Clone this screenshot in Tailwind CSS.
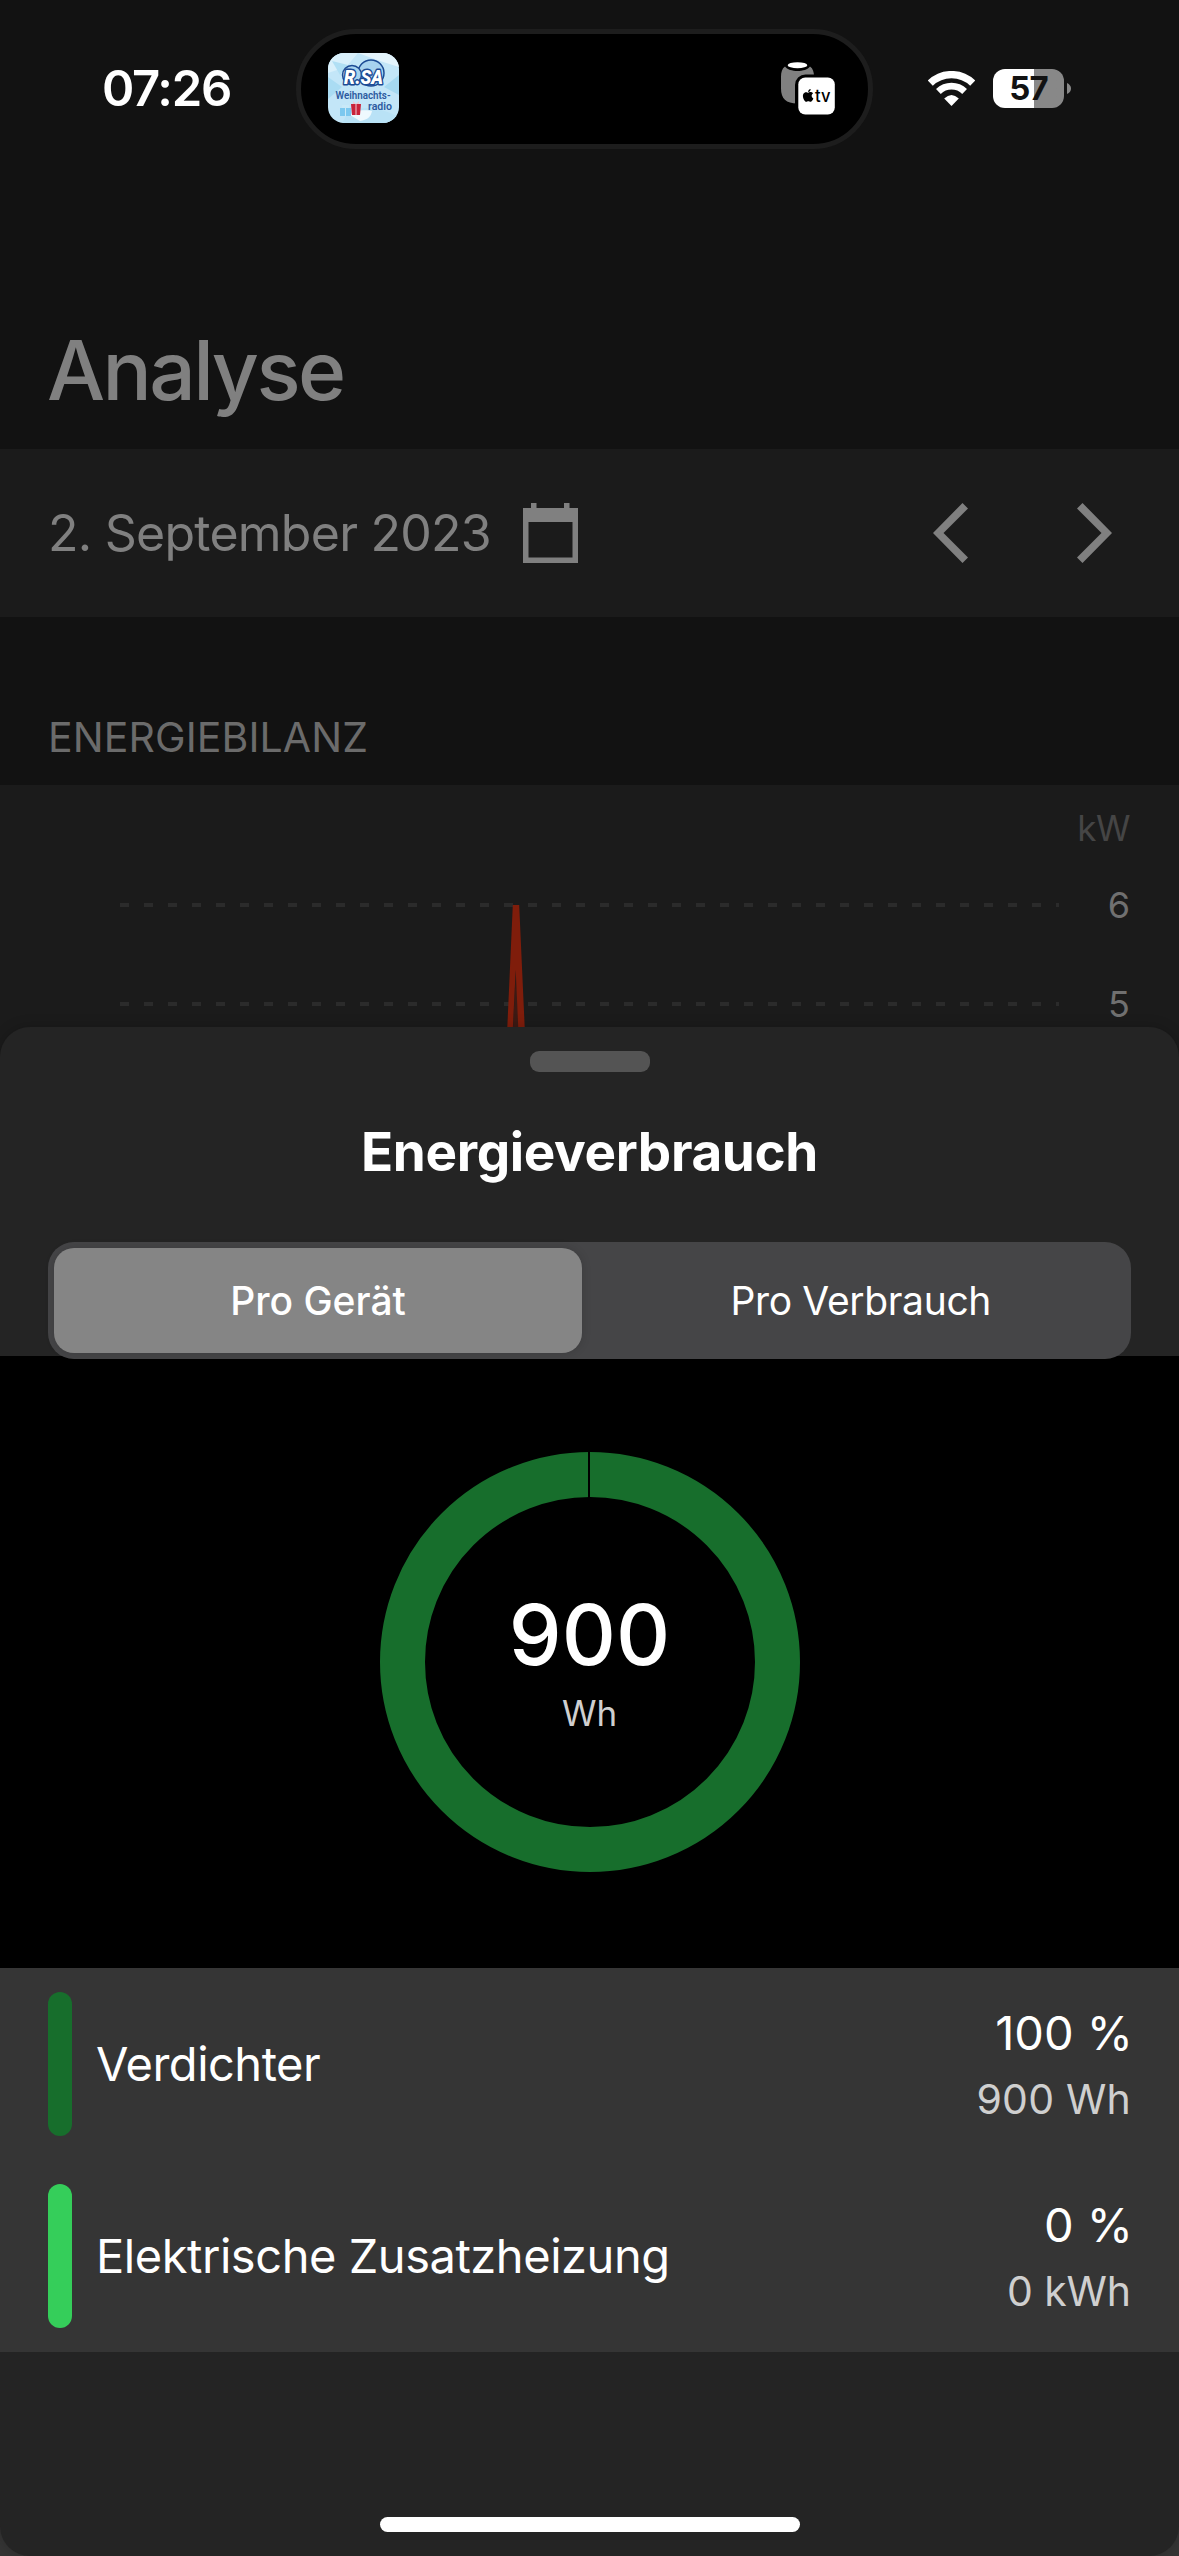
<!DOCTYPE html>
<html lang="de">

<head>
    <meta charset="UTF-8">
    <meta name="viewport" content="width=device-width, initial-scale=1.0">
    <title>Analyse</title>
    <script src="https://cdn.jsdelivr.net/npm/@tailwindcss/browser@4"></script>
</head>

<body class="bg-[#121212] font-['Inter','Liberation_Sans',sans-serif]">
    <div class="relative w-[1179px] h-[2556px] overflow-hidden bg-[#353535]">

        <!-- Status bar -->
        <header class="flex items-center h-[176px] pl-[102px] bg-[#121212]">
            <div class="w-[194px] text-[49px] font-semibold text-white leading-none tracking-[-1.3px]">07:26</div>

            <!-- Dynamic island -->
            <div class="flex items-center justify-between w-[577px] h-[120px] mt-[2px] pb-[2px] pl-[27px] pr-[33px] rounded-full bg-black border-[5px] border-[#1d1d1d]">
                <svg class="w-[71px] h-[70px] rounded-[16px]" viewBox="0 0 71 70" font-family="Roboto, Inter, sans-serif">
                    <rect width="71" height="70" fill="#c3e6f8" />
                    <path d="M0 0h30L18 14 0 20z" fill="#d9f0fb" />
                    <path d="M30 0h41v14L52 8z" fill="#e4f4fc" />
                    <path d="M71 22 56 34l15 8z" fill="#a5d9f1" />
                    <path d="M0 24l14 10L0 46z" fill="#aadcf3" />
                    <path d="M4 8l16 4-8 10z" fill="#b0dff4" />
                    <path d="M20 60c14-8 30-6 51 4v6H14z" fill="#b9e2f6" />
                    <path d="M22 62c6-6 18-5 22-4-1 6-5 9-12 10z" fill="#eef9fe" />
                    <circle cx="43" cy="20" r="13" fill="#a8d3ef" stroke="#1d4b94" stroke-width="1.500" />
                    <circle cx="24" cy="22" r="9.500" fill="#a8d3ef" stroke="#1d4b94" stroke-width="1.500" />
                    <text x="16" y="31" font-size="20" font-weight="900" font-style="italic" fill="#fff" stroke="#1d4b94" stroke-width="3" stroke-linejoin="round" paint-order="stroke" textLength="39" lengthAdjust="spacingAndGlyphs">R.SA</text>
                    <text x="7.500" y="46" font-size="10.500" font-weight="600" fill="#2c5a9f" textLength="55" lengthAdjust="spacingAndGlyphs">Weihnachts-</text>
                    <text x="40" y="57" font-size="10.500" font-weight="600" fill="#2c5a9f" textLength="24" lengthAdjust="spacingAndGlyphs">radio</text>
                    <path d="M12 55h11v8H12z" fill="#7cc8ef" />
                    <path d="M14 52h7v3h-7zM17 55h1v8h-1z" fill="#c9e9f8" />
                    <path d="M23 51h10l-1 11h-8z" fill="#c9233a" />
                    <path d="M27.500 51h1v11h-1zM25 48l3 3 3-3v3h-6z" fill="#ecc9d2" />
                </svg>
                <svg class="w-[54px] h-[53px]" viewBox="781 61.500 54 53">
                    <path d="M785 66c4 6 21 6 25 0 3 2 4 6 4 10v12c0 10-5 15-16.500 15S781 98 781 88V76c0-4 1-8 4-10z" fill="#808080" />
                    <ellipse cx="797.500" cy="64.700" rx="9.800" ry="3" fill="#fff" />
                    <rect x="796.500" y="75.500" width="41" height="42" rx="9" stroke="#000" stroke-width="3" fill="#000" />
                    <rect x="798.300" y="77" width="36.500" height="37" rx="7" fill="#fff" />
                    <path transform="translate(801.700 88.500) scale(.535)" fill="#000" d="M12.152 6.896c-.948 0-2.415-1.078-3.960-1.040-2.040.027-3.910 1.183-4.961 3.014-2.117 3.675-.546 9.103 1.519 12.090 1.013 1.454 2.208 3.090 3.792 3.039 1.520-.065 2.090-.987 3.935-.987 1.831 0 2.350.987 3.960.948 1.637-.026 2.676-1.480 3.676-2.948 1.156-1.688 1.636-3.325 1.662-3.415-.039-.013-3.182-1.221-3.220-4.857-.026-3.040 2.480-4.494 2.597-4.559-1.429-2.090-3.623-2.324-4.390-2.376-2-.156-3.675 1.090-4.610 1.090zM15.530 3.830c.843-1.012 1.400-2.427 1.245-3.830-1.207.052-2.662.805-3.532 1.818-.780.896-1.454 2.338-1.273 3.714 1.338.104 2.715-.688 3.559-1.701" />
                    <text x="815" y="101.300" font-size="17" font-weight="500" font-family="Inter, sans-serif" textLength="15.500" lengthAdjust="spacingAndGlyphs">tv</text>
                </svg>
            </div>

            <!-- Wi-Fi -->
            <svg class="w-[47px] h-[35px] ml-[55px]" viewBox="0 0 47 35" fill="none" stroke="#fff">
                <path d="M2.300 12.100A30.500 30.500 0 0 1 44.700 12.100" stroke-width="7.200" />
                <path d="M10.400 20.500A18.800 18.800 0 0 1 36.600 20.500" stroke-width="6.800" />
                <path d="M16.200 27.500Q23.500 20.500 30.800 27.500L23.500 35z" fill="#fff" stroke="none" />
            </svg>

            <!-- Battery -->
            <div class="flex items-center ml-[18px]">
                <div class="flex items-center justify-center w-[71px] h-[39px] rounded-[12px] bg-linear-to-r from-white from-[58%] to-[#888888] to-[58%] text-[#121212] text-[33px] font-bold leading-none tracking-[-1px]">57</div>
                <svg class="w-[4px] h-[11px] ml-[3px]" viewBox="0 0 4 11">
                    <path d="M0 0q4 2 4 5.500T0 11z" fill="#888" />
                </svg>
            </div>
        </header>

        <!-- Title -->
        <div class="pt-[117px] pl-[47px] bg-[#121212]">
            <h1 class="text-[82px] leading-[156px] font-medium text-[#808080] tracking-[-2.6px]">Analyse</h1>
        </div>

        <!-- Date picker -->
        <div class="flex items-center h-[168px] pl-[48px] pr-[67px] bg-[#1b1b1b]">
            <div class="w-[475px] text-[50px] text-[#808080] leading-none whitespace-nowrap tracking-[-0.75px]">2. September 2023</div>
            <svg class="w-[55px] h-[60px]" viewBox="0 0 55 60" fill="#808080">
                <path fill-rule="evenodd" d="M8 0h5.500v5H41V0h5.500v5H55v55H0V5h8zM5.500 19v35.500h44V19z" />
            </svg>
            <svg class="w-[35px] h-[60px] ml-auto" viewBox="0 0 35 60" fill="#808080">
                <path d="M29.500 0 35 5.500 10.500 30 35 54.500 29.500 60 0 30z" />
            </svg>
            <svg class="w-[35px] h-[60px] ml-[109px]" viewBox="0 0 35 60" fill="#808080">
                <path d="M5.500 0 0 5.500 24.500 30 0 54.500 5.500 60 35 30z" />
            </svg>
        </div>

        <div class="pt-[72px] pl-[48px] bg-[#121212]">
            <h2 class="text-[41px] leading-[96px] text-[#6b6b6b] tracking-[0.1px]">ENERGIEBILANZ</h2>
        </div>

        <!-- Chart -->
        <div class="flex h-[300px] bg-[#1b1b1b]">
            <svg class="w-[1059px] h-[300px]" viewBox="0 0 1059 300" fill="none">
                <path d="M120 120H1059M120 219H1059" stroke="#2b2b2b" stroke-width="4" stroke-dasharray="9 15" />
                <path d="M516 185 512 260H520z" fill="#3c1a14" />
                <path d="M512.800 120H519.200L525.500 260H519L515.700 185 512 260H506.500z" fill="#7f1d0b" />
            </svg>
            <div class="flex-1 pt-[16px] pr-[49px] text-right text-[36px] text-[#707070]">
                <div class="leading-[54px] text-[35px] text-[#454545] tracking-[-0.5px]">kW</div>
                <div class="leading-[100px]">6</div>
                <div class="leading-[98px]">5</div>
            </div>
        </div>

        <!-- Bottom sheet -->
        <section class="absolute inset-x-0 top-[1027px] bottom-0 flex flex-col pt-[24px] rounded-[30px] bg-[#242424] text-white shadow-[0_0_14px_rgba(0,0,0,0.2)]">
            <div class="w-[120px] h-[21px] mx-auto rounded-[9px] bg-[#545454]"></div>
            <h3 class="mt-[40px] text-center text-[53px] leading-[80px] font-bold tracking-[-0.35px]">Energieverbrauch</h3>

            <!-- Segmented control -->
            <div class="relative z-10 grid grid-cols-2 h-[117px] mt-[50px] mx-[48px] p-[6px] rounded-[26px] bg-[#454547] text-[39px] text-center leading-[105px]">
                <div class="w-[528px] rounded-[20px] bg-[#858585] font-medium shadow-[0_0_10px_rgba(0,0,0,0.15)]">Pro Gerät</div>
                <div class="pl-[7px] tracking-[-0.35px]">Pro Verbrauch</div>
            </div>

            <!-- Donut -->
            <div class="h-[612px] -mt-[3px] pt-[96px] bg-black">
                <div class="relative flex flex-col items-center w-[420px] h-[420px] mx-auto pt-[96px] rounded-full border-[45px] border-[#176e2c]">
                    <div class="absolute -top-[45px] left-[163px] w-[2px] h-[46px] bg-black"></div>
                    <div class="text-[84px] leading-[84px] font-medium">900</div>
                    <div class="mt-[12px] text-[35px] leading-[48px] text-[#cfcfcf]">Wh</div>
                </div>
            </div>

            <!-- Devices -->
            <ul class="bg-[#353535] text-[47px]">
                <li class="flex h-[192px] px-[48px] py-[24px]">
                    <span class="w-[24px] rounded-full bg-[#176e2c]"></span>
                    <span class="ml-[24px] leading-[144px] tracking-[-0.5px]">Verdichter</span>
                    <div class="ml-auto pt-[8px] text-right leading-[66px]">
                        <div class="-mr-[2px]">100 %</div>
                        <div class="text-[41px] leading-[66px] text-[#cfcfcf] tracking-[0.2px]">900 Wh</div>
                    </div>
                </li>
                <li class="flex h-[192px] px-[48px] py-[24px]">
                    <span class="w-[24px] rounded-full bg-[#35ce5a]"></span>
                    <span class="ml-[24px] leading-[144px] tracking-[-0.45px]">Elektrische Zusatzheizung</span>
                    <div class="ml-auto pt-[8px] text-right leading-[66px]">
                        <div class="-mr-[2px]">0 %</div>
                        <div class="text-[41px] leading-[66px] text-[#cfcfcf] tracking-[-0.1px]">0 kWh</div>
                    </div>
                </li>
            </ul>

            <!-- Home indicator -->
            <div class="w-[420px] h-[15px] mt-auto mb-[24px] mx-auto rounded-full bg-white"></div>
        </section>
    </div>
</body>

</html>
